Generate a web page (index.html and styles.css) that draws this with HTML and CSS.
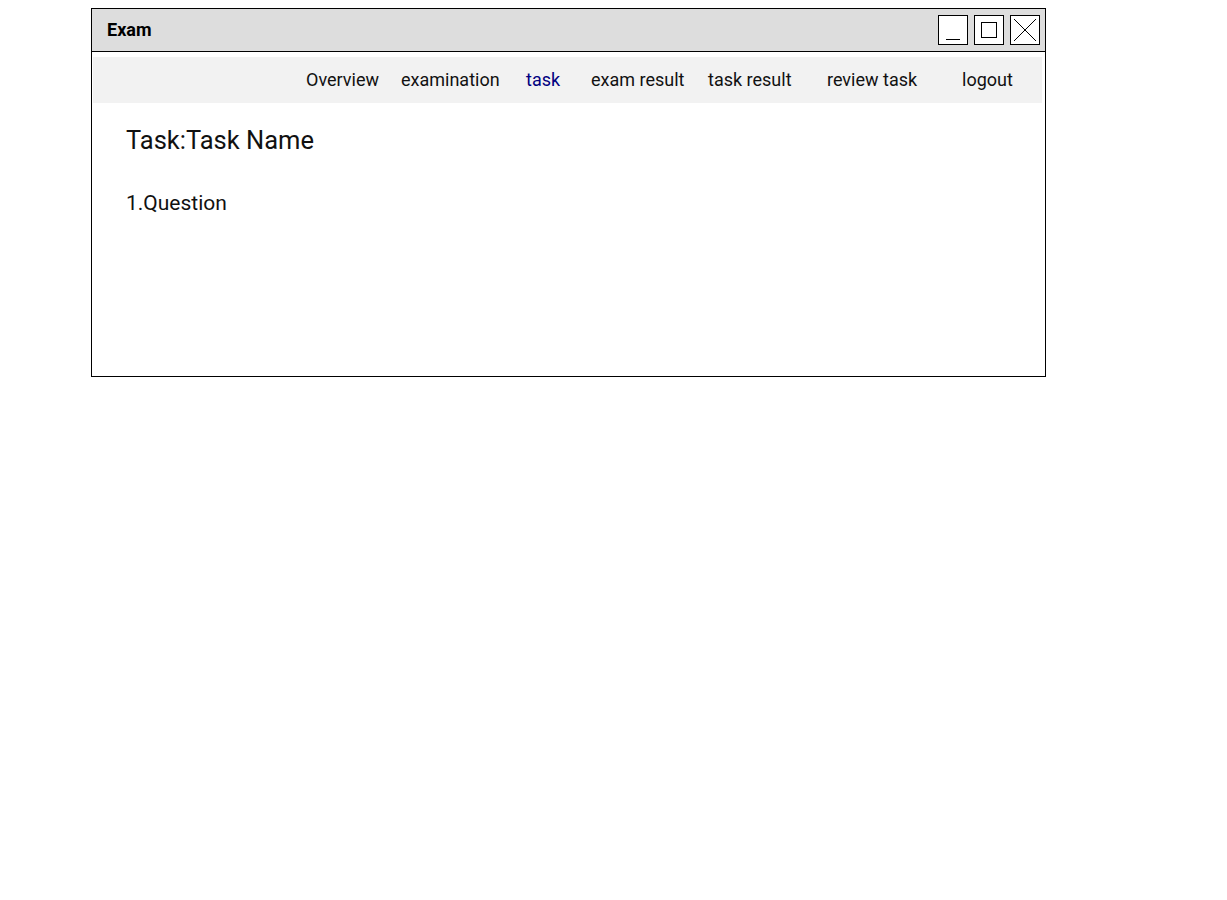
FILE: index.html
```html
<!DOCTYPE html>
<html>
<head>
<meta charset="utf-8">
<link rel="stylesheet" href="styles.css">
</head>
<body>
<div class="window">
  <div class="titlebar">
    <span class="title">Exam</span>
    <div class="controls">
      <div class="ctrl"><svg width="30" height="30" viewBox="0 0 30 30"><line x1="8" y1="24.5" x2="22" y2="24.5" stroke="#000" stroke-width="1"/></svg></div>
      <div class="ctrl"><svg width="30" height="30" viewBox="0 0 30 30"><rect x="7.5" y="7.5" width="15" height="15" fill="none" stroke="#000" stroke-width="1"/></svg></div>
      <div class="ctrl"><svg width="30" height="30" viewBox="0 0 30 30"><path d="M4 4 L26 26 M26 4 L4 26" stroke="#000" stroke-width="1" fill="none"/></svg></div>
    </div>
  </div>
  <nav class="nav">
    <span class="nav-item">Overview</span>
    <span class="nav-item">examination</span>
    <span class="nav-item active">task</span>
    <span class="nav-item">exam result</span>
    <span class="nav-item">task result</span>
    <span class="nav-item">review task</span>
    <span class="nav-item">logout</span>
  </nav>
  <div class="content">
    <h1 class="heading">Task:Task Name</h1>
    <p class="question">1.Question</p>
  </div>
</div>
</body>
</html>
```
FILE: styles.css
```css
html, body {
  margin: 0;
  padding: 0;
  background: #ffffff;
}
body {
  font-family: Roboto, "Liberation Sans", sans-serif;
  color: #000;
  padding: 8px 0 0 91px;
}
.window {
  width: 953px;
  height: 367px;
  border: 1px solid #000;
  box-sizing: content-box;
  display: flex;
  flex-direction: column;
}
.titlebar {
  height: 43px;
  box-sizing: border-box;
  background: #dddddd;
  border-bottom: 1px solid #000;
  display: flex;
  align-items: center;
  justify-content: space-between;
  padding: 0 5px 1px 15px;
}
.title {
  font-weight: bold;
  font-size: 18px;
}
.controls {
  display: flex;
  gap: 6px;
}
.ctrl {
  width: 30px;
  height: 30px;
  border: 1px solid #000;
  background: #fff;
  box-sizing: border-box;
  display: flex;
}
.ctrl svg {
  display: block;
  margin: -1px;
}
.nav {
  margin: 5px 3px 0 1px;
  height: 46px;
  box-sizing: border-box;
  background: #f2f2f2;
  display: grid;
  grid-template-columns: 95px 125px 65px 117px 119px 135px auto;
  align-items: center;
  padding: 0 0 2px 213px;
  font-size: 18px;
  color: #111;
}
.nav-item {
  white-space: nowrap;
}
.nav-item.active {
  color: #000080;
}
.content {
  padding: 22px 34px;
  color: #111;
}
.heading {
  margin: 0;
  font-weight: normal;
  font-size: 25.5px;
  line-height: 30px;
}
.question {
  margin: 36px 0 0 0;
  font-size: 21px;
  line-height: 24px;
}
```
